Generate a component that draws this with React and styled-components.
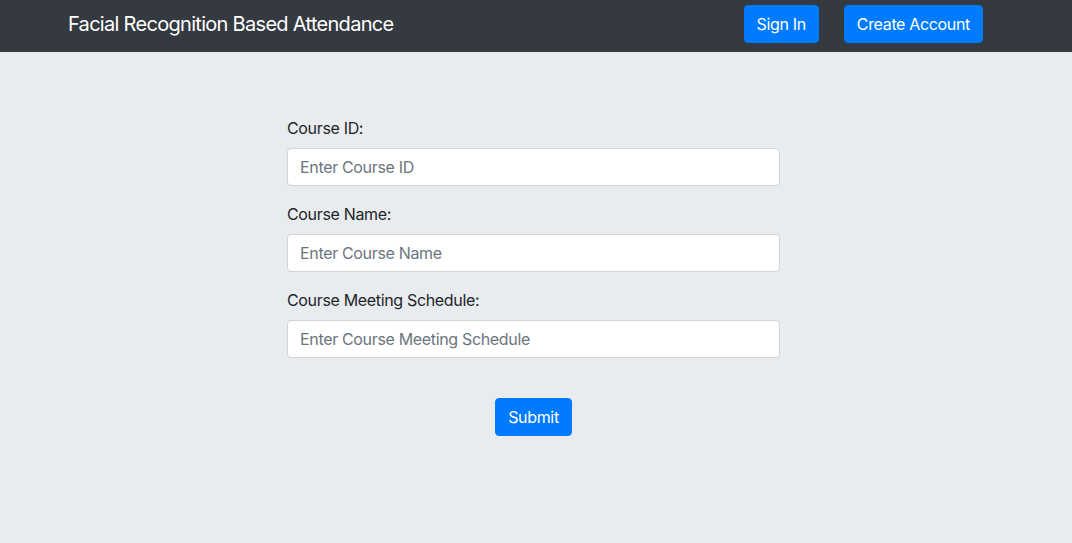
import React from "react";
import styled, { createGlobalStyle } from "styled-components";

const Global = createGlobalStyle`
  html, body { margin: 0; padding: 0; }
  body {
    background: #e9ecef;
    font-family: Inter, "Noto Sans", "Liberation Sans", sans-serif;
    color: #212529;
    letter-spacing: -0.021em;
    min-height: 543px;
  }
`;

const Navbar = styled.nav`
  height: 52px;
  background: #343a40;
  display: flex;
  align-items: center;
  padding: 0 89px 4px 68px;
  box-sizing: border-box;
`;

const Brand = styled.a`
  color: #fff;
  font-size: 20px;
  line-height: 30px;
  letter-spacing: -0.035em;
  text-decoration: none;
  flex: 1;
`;

const Actions = styled.div`
  display: flex;
  gap: 25px;
`;

const Button = styled.button`
  background: #007bff;
  color: #fff;
  border: 1px solid #007bff;
  border-radius: 4px;
  font-family: inherit;
  letter-spacing: inherit;
  font-size: 16px;
  line-height: 24px;
  padding: 6px 12px;
  cursor: pointer;
`;

const Main = styled.main`
  padding: 64px 0 0 287px;
`;

const Form = styled.form`
  width: 493px;
  display: flex;
  flex-direction: column;
`;

const Group = styled.div`
  display: flex;
  flex-direction: column;
  margin-bottom: 16px;
`;

const Label = styled.label`
  font-size: 16px;
  line-height: 24px;
  margin-bottom: 8px;
`;

const Input = styled.input`
  height: 38px;
  box-sizing: border-box;
  border: 1px solid #ced4da;
  border-radius: 4px;
  background: #fff;
  padding: 6px 12px;
  font-family: inherit;
  letter-spacing: inherit;
  font-size: 16px;
  color: #495057;
  &::placeholder { color: #6c757d; }
  outline: none;
`;

const SubmitRow = styled.div`
  display: flex;
  justify-content: center;
  margin-top: 24px;
`;

const fields = [
  { id: "cid", label: "Course ID:", ph: "Enter Course ID" },
  { id: "cname", label: "Course Name:", ph: "Enter Course Name" },
  { id: "csched", label: "Course Meeting Schedule:", ph: "Enter Course Meeting Schedule" },
];

export default function App() {
  return (
    <>
      <Global />
      <Navbar>
        <Brand href="#">Facial Recognition Based Attendance</Brand>
        <Actions>
          <Button type="button">Sign In</Button>
          <Button type="button">Create Account</Button>
        </Actions>
      </Navbar>
      <Main>
        <Form onSubmit={(e) => e.preventDefault()}>
          {fields.map((f) => (
            <Group key={f.id}>
              <Label htmlFor={f.id}>{f.label}</Label>
              <Input id={f.id} placeholder={f.ph} />
            </Group>
          ))}
          <SubmitRow>
            <Button type="submit">Submit</Button>
          </SubmitRow>
        </Form>
      </Main>
    </>
  );
}
